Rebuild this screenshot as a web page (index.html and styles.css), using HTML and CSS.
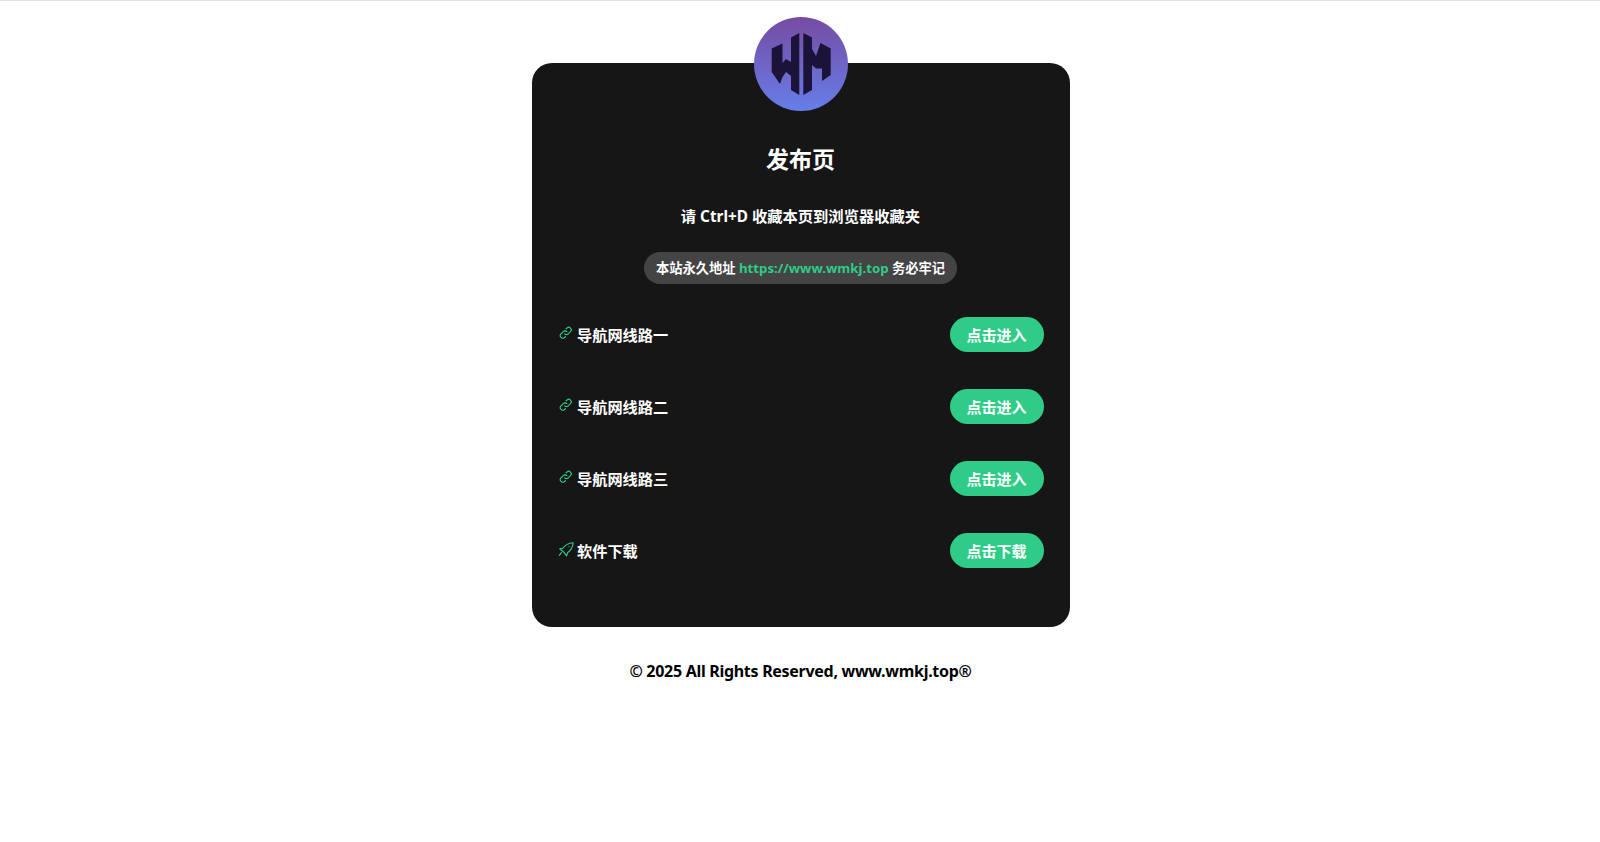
FILE: index.html
```html
<!DOCTYPE html>
<html lang="zh-CN">
<head>
<meta charset="utf-8">
<title>发布页</title>
<link rel="stylesheet" href="styles.css">
</head>
<body>
<main class="page">
  <section class="card">
    <div class="logo">
      <svg viewBox="0 0 94 94" width="94" height="94">
        <defs><linearGradient id="g" x1="0" y1="0" x2="0" y2="1"><stop offset="0" stop-color="#764ba2"/><stop offset="1" stop-color="#667eea"/></linearGradient></defs>
        <circle cx="47" cy="47" r="47" fill="url(#g)"/>
        <path d="M17.700 31.500L28.500 26.500V46L32 42L37 45V20.500L45.300 16V78L37 73V59L32 55L28.500 60L26 67L17.700 55Z" fill="#1b1438"/>
        <path d="M49.300 16L58 20.500V32L62 39L66.500 26L76.700 31.500V58L68 64V51.500H62L58 48V73L49.300 78Z" fill="#1b1438"/>
      </svg>
    </div>
    <h1 class="title">发布页</h1>
    <p class="hint">请 Ctrl+D 收藏本页到浏览器收藏夹</p>
    <div class="pill-wrap"><span class="pill">本站永久地址 <a class="accent">https://www.wmkj.top</a> 务必牢记</span></div>
    <ul class="rows">
      <li class="row">
        <span class="label"><span class="slot"><svg class="icon" viewBox="0 0 24 24"><path d="M10 14a4.500 4.500 0 0 0 6.400 0l4-4a4.500 4.500 0 0 0-6.400-6.400l-1.600 1.600"/><path d="M14 10a4.500 4.500 0 0 0-6.400 0l-4 4a4.500 4.500 0 0 0 6.400 6.400l1.600-1.600"/></svg></span>导航网线路一</span>
        <a class="btn">点击进入</a>
      </li>
      <li class="row">
        <span class="label"><span class="slot"><svg class="icon" viewBox="0 0 24 24"><path d="M10 14a4.500 4.500 0 0 0 6.400 0l4-4a4.500 4.500 0 0 0-6.400-6.400l-1.600 1.600"/><path d="M14 10a4.500 4.500 0 0 0-6.400 0l-4 4a4.500 4.500 0 0 0 6.400 6.400l1.600-1.600"/></svg></span>导航网线路二</span>
        <a class="btn">点击进入</a>
      </li>
      <li class="row">
        <span class="label"><span class="slot"><svg class="icon" viewBox="0 0 24 24"><path d="M10 14a4.500 4.500 0 0 0 6.400 0l4-4a4.500 4.500 0 0 0-6.400-6.400l-1.600 1.600"/><path d="M14 10a4.500 4.500 0 0 0-6.400 0l-4 4a4.500 4.500 0 0 0 6.400 6.400l1.600-1.600"/></svg></span>导航网线路三</span>
        <a class="btn">点击进入</a>
      </li>
      <li class="row">
        <span class="label"><span class="slot"><svg class="icon rocket" viewBox="0 0 24 24"><path d="M22 2.500C15 3 10.500 5.500 7 10.500L2.500 11.500L6.500 14.500L9.500 17.500L12.500 21.500L14 17C19 13.500 21.500 9.500 22 2.500Z"/><path d="M16 8h.01"/><path d="M5 17l-3 4"/></svg></span>软件下载</span>
        <a class="btn">点击下载</a>
      </li>
    </ul>
  </section>
  <footer class="foot">© 2025 All Rights Reserved, www.wmkj.top®</footer>
</main>
</body>
</html>
```
FILE: styles.css
```css
* { box-sizing: border-box; }
html, body { margin: 0; padding: 0; }
body {
  background: #fff;
  border-top: 1px solid #e2e2e2;
  font-family: "Noto Sans", "Noto Sans CJK SC", sans-serif;
  font-weight: 700;
  height: 842px;
  overflow: hidden;
}
.page { display: flex; flex-direction: column; align-items: center; padding: 62px 0 0 1px; }
.card {
  position: relative;
  width: 538px;
  height: 564px;
  background: #161616;
  border-radius: 20px;
  color: #fff;
  padding: 81px 26px 0;
}
.logo { position: absolute; top: -46px; left: 222px; width: 94px; height: 94px; }
.logo svg { display: block; }
.title { margin: 0; font-size: 23px; line-height: 30px; text-align: center; font-weight: 700; }
.hint { margin: 31px 0 0; font-size: 15.300px; line-height: 22px; text-align: center; }
.pill-wrap { display: flex; justify-content: center; margin-top: 25px; }
.pill {
  display: block;
  height: 32px;
  line-height: 33px;
  padding: 0 11.500px;
  background: #444;
  border-radius: 16px;
  font-size: 13.250px;
  white-space: nowrap;
}
.accent { color: #2ecc87; }
.rows { list-style: none; margin: 33px 0 0; padding: 0; display: flex; flex-direction: column; gap: 37px; }
.row { display: flex; align-items: center; justify-content: space-between; height: 35px; }
.label { display: flex; align-items: center; padding-top: 1px; font-size: 15.200px; line-height: 34px; }
.slot { display: flex; align-items: center; width: 19.500px; height: 20px; margin-top: -4px; }
.icon { display: block; width: 13.500px; height: 13.500px; margin-left: 1px; fill: none; stroke: #2ecc87; stroke-width: 2; stroke-linecap: round; stroke-linejoin: round; }
.rocket { width: 16.500px; height: 16.500px; margin-left: 0; stroke-width: 1.700; }
.btn {
  display: block;
  width: 94px;
  height: 35px;
  padding-top: 1px;
  line-height: 34px;
  text-align: center;
  background: #2ecc87;
  border-radius: 18px;
  color: #fff;
  font-size: 15px;
}
.foot { margin-top: 33px; font-size: 16px; line-height: 22px; letter-spacing: -0.290px; color: #000; }
```
